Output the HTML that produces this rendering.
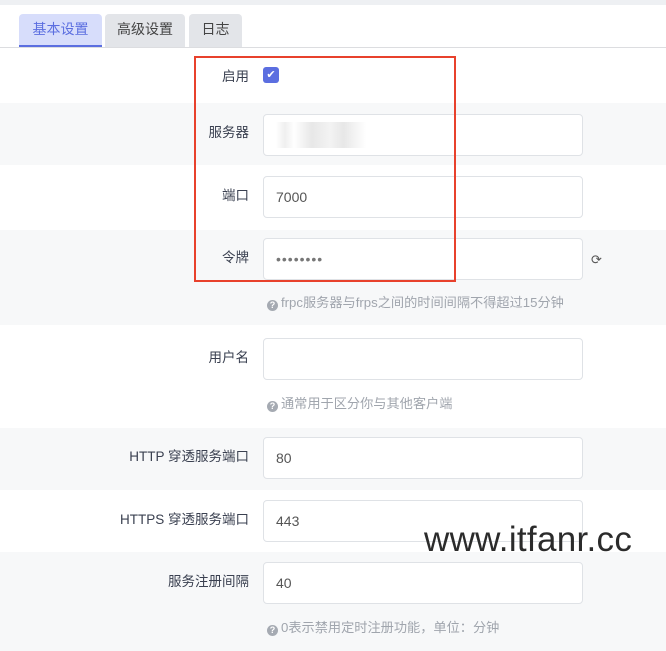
<!DOCTYPE html>
<html><head><meta charset="utf-8"><style>
*{margin:0;padding:0;box-sizing:border-box}
body{width:666px;height:651px;overflow:hidden;background:#fff;font-family:"Liberation Sans","Noto Sans CJK SC",sans-serif;position:relative;color:#333}
.top{position:absolute;left:0;top:0;width:666px;height:5px;background:#eef0f3}
.tab{position:absolute;top:14px;height:33px;line-height:31px;font-size:14px;text-align:center;border-radius:4px 4px 0 0;background:#e3e5e9;color:#444}
.tab.a{background:#d7ddfb;color:#5b6ee0;border-bottom:2px solid #5b6ee0}
.line{position:absolute;left:0;top:47px;width:666px;height:1px;background:#dcdde0}
.row{position:absolute;left:0;width:666px}
.g{background:#f7f8f9}
.lbl{position:absolute;right:417px;font-size:13.5px;color:#3a4050;white-space:nowrap}
.inp{position:absolute;left:263px;width:320px;height:42px;border:1px solid #dfe2e6;border-radius:4px;background:#fff;font-size:14px;color:#555;padding-left:12px;line-height:40px}
.help{position:absolute;left:267px;font-size:13.2px;color:#a0a5ad}
.help b{display:inline-block;width:11px;height:11px;border-radius:50%;background:#a5aab2;color:#fff;font-size:9px;line-height:11px;text-align:center;vertical-align:-1px;margin-right:3px}
.red{position:absolute;left:194px;top:56px;width:262px;height:226px;border:2px solid #e8412c}
.wm{position:absolute;left:424px;top:520px;font-size:35px;color:#2b2b2b;letter-spacing:.3px}
</style></head><body>
<div class="top"></div>
<div class="tab a" style="left:19px;width:83px">基本设置</div>
<div class="tab" style="left:105px;width:80px">高级设置</div>
<div class="tab" style="left:189px;width:53px">日志</div>
<div class="line"></div>

<div class="row" style="top:48px;height:55px"></div>
<div class="lbl" style="top:65px">启用</div>
<div style="position:absolute;left:263px;top:67px;width:16px;height:16px;border-radius:3px;background:#5b6ee0;color:#fff;font-size:11px;line-height:16px;text-align:center">✔</div>

<div class="row g" style="top:103px;height:62px"></div>
<div class="lbl" style="top:121px">服务器</div>
<div class="inp" style="top:114px"><span style="display:inline-block;width:90px;height:26px;margin-top:7px;background:linear-gradient(90deg,#fff 0,#e8e8e8 10%,#fff 20%,#ddd 40%,#eee 60%,#ddd 75%,#fff 100%);opacity:.7"></span></div>

<div class="row" style="top:165px;height:65px"></div>
<div class="lbl" style="top:184px">端口</div>
<div class="inp" style="top:176px">7000</div>

<div class="row g" style="top:230px;height:95px"></div>
<div class="lbl" style="top:246px">令牌</div>
<div class="inp" style="top:238px;letter-spacing:1px;color:#777">••••••••</div>
<div style="position:absolute;left:591px;top:252px;font-size:13px;color:#555">⟳</div>
<div class="help" style="top:292px"><b>?</b>frpc服务器与frps之间的时间间隔不得超过15分钟</div>

<div class="row" style="top:325px;height:103px"></div>
<div class="lbl" style="top:346px">用户名</div>
<div class="inp" style="top:338px"></div>
<div class="help" style="top:393px"><b>?</b>通常用于区分你与其他客户端</div>

<div class="row g" style="top:428px;height:62px"></div>
<div class="lbl" style="top:445px">HTTP 穿透服务端口</div>
<div class="inp" style="top:437px">80</div>

<div class="row" style="top:490px;height:62px"></div>
<div class="lbl" style="top:508px">HTTPS 穿透服务端口</div>
<div class="inp" style="top:500px">443</div>

<div class="row g" style="top:552px;height:99px"></div>
<div class="lbl" style="top:570px">服务注册间隔</div>
<div class="inp" style="top:562px">40</div>
<div class="help" style="top:617px"><b>?</b>0表示禁用定时注册功能，单位：分钟</div>

<div class="red"></div>
<div class="wm">www.itfanr.cc</div>
</body></html>
